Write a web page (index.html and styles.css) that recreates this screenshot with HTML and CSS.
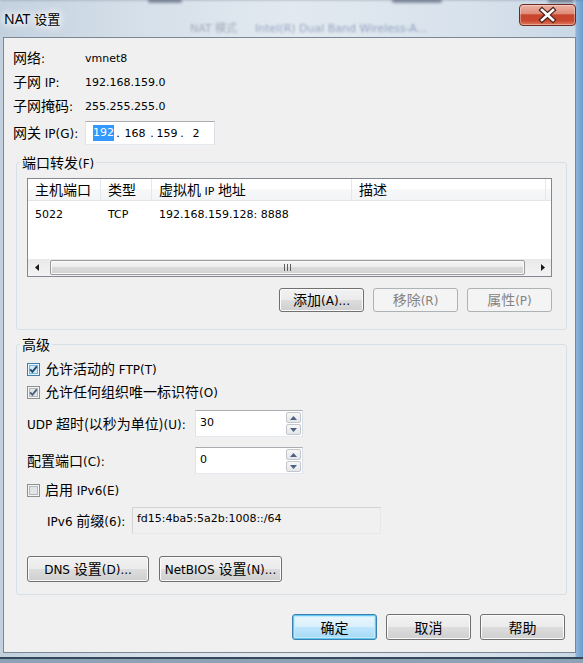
FILE: index.html
```html
<!DOCTYPE html>
<html lang="zh-CN">
<head>
<meta charset="utf-8">
<title>NAT 设置</title>
<link rel="stylesheet" href="styles.css">
</head>
<body>
<div class="window">
  <div class="titlebar">
    <div class="glass" aria-hidden="true">
      <div class="blob b1"></div>
      <div class="blob b2"></div>
      <div class="blob b3"></div>
      <div class="blob b4"></div>
      <span class="ghost gh4">NAT 模式</span>
      <span class="ghost gh5">Intel(R) Dual Band Wireless-A...</span>
    </div>
    <div class="title"><span class="tl">NAT</span> <span class="tz">设置</span></div>
    <div class="close">
      <svg width="57" height="22" viewBox="0 0 57 22">
        <path d="M23 6 L34 16 M34 6 L23 16" stroke="#4a2019" stroke-width="5" stroke-linecap="square" fill="none"/>
        <path d="M23 6 L34 16 M34 6 L23 16" stroke="#ffffff" stroke-width="2.6" stroke-linecap="square" fill="none"/>
      </svg>
    </div>
  </div>

  <div class="client">
    <div class="info">
      <div class="row"><span class="lbl"><span class="z">网络</span>:</span><span class="v">vmnet8</span></div>
      <div class="row"><span class="lbl"><span class="z">子网</span> IP:</span><span class="v">192.168.159.0</span></div>
      <div class="row"><span class="lbl"><span class="z">子网掩码</span>:</span><span class="v">255.255.255.0</span></div>
      <div class="row gw">
        <span class="lbl"><span class="z">网关</span> IP(G):</span>
        <div class="ipbox"><span class="sel">192</span><span class="dot">.</span><span class="oc w26">168</span><span class="dot">.</span><span class="oc w22">159</span><span class="dot">.</span><span class="oc w20">2</span></div>
      </div>
    </div>

    <div class="group gp1">
      <div class="cap"><span class="z">端口转发</span>(F)</div>
      <div class="list">
        <div class="lhead">
          <div class="cell c1"><span><span class="z">主机端口</span></span></div>
          <div class="cell c2"><span><span class="z">类型</span></span></div>
          <div class="cell c3"><span><span class="z">虚拟机</span> IP <span class="z">地址</span></span></div>
          <div class="cell c4"><span><span class="z">描述</span></span></div>
        </div>
        <div class="lbody">
          <div class="lrow">
            <div class="cell c1">5022</div>
            <div class="cell c2">TCP</div>
            <div class="cell c3">192.168.159.128: 8888</div>
            <div class="cell c4"></div>
          </div>
        </div>
        <div class="hscroll">
          <div class="sarr"><svg width="4" height="7" viewBox="0 0 4 7"><path d="M4 0 L0 3.5 L4 7Z" fill="#1a1a1a"/></svg></div>
          <div class="track">
            <div class="thumb">
              <svg width="7" height="7" viewBox="0 0 7 7">
                <path d="M0.5 0 V7 M3.5 0 V7 M6.5 0 V7" stroke="#5e5e5e" stroke-width="1"/>
              </svg>
            </div>
          </div>
          <div class="sarr"><svg width="4" height="7" viewBox="0 0 4 7"><path d="M0 0 L4 3.5 L0 7Z" fill="#1a1a1a"/></svg></div>
        </div>
      </div>
      <div class="btns">
        <div class="btn"><span><span class="z">添加</span>(A)...</span></div>
        <div class="btn dis"><span><span class="z">移除</span>(R)</span></div>
        <div class="btn dis"><span><span class="z">属性</span>(P)</span></div>
      </div>
    </div>

    <div class="group gp2">
      <div class="cap"><span class="z">高级</span></div>

      <div class="chkrow r1">
        <svg class="cb hot" width="13" height="13" viewBox="0 0 13 13">
          <rect class="o" x="0.5" y="0.5" width="12" height="12"/>
          <rect class="i" x="2.5" y="2.5" width="8" height="8"/>
          <path class="k" d="M3.2 6.4 L5.4 8.8 L9.8 3.4"/>
        </svg>
        <span><span class="z">允许活动的</span> FTP(T)</span>
      </div>

      <div class="chkrow r2">
        <svg class="cb" width="13" height="13" viewBox="0 0 13 13">
          <rect class="o" x="0.5" y="0.5" width="12" height="12"/>
          <rect class="i" x="2.5" y="2.5" width="8" height="8"/>
          <path class="k soft" d="M3.2 6.4 L5.4 8.8 L9.8 3.4"/>
        </svg>
        <span><span class="z">允许任何组织唯一标识符</span>(O)</span>
      </div>

      <div class="frow r3">
        <span class="flbl">UDP <span class="z">超时(以秒为单位)</span>(U):</span>
        <div class="spin">
          <div class="val">30</div>
          <div class="arrows">
            <div class="ab"><svg width="7" height="4" viewBox="0 0 7 4"><path d="M0 4 L3.5 0 L7 4Z"/></svg></div>
            <div class="ab"><svg width="7" height="4" viewBox="0 0 7 4"><path d="M0 0 L3.5 4 L7 0Z"/></svg></div>
          </div>
        </div>
      </div>

      <div class="frow r4">
        <span class="flbl"><span class="z">配置端口</span>(C):</span>
        <div class="spin">
          <div class="val">0</div>
          <div class="arrows">
            <div class="ab"><svg width="7" height="4" viewBox="0 0 7 4"><path d="M0 4 L3.5 0 L7 4Z"/></svg></div>
            <div class="ab"><svg width="7" height="4" viewBox="0 0 7 4"><path d="M0 0 L3.5 4 L7 0Z"/></svg></div>
          </div>
        </div>
      </div>

      <div class="chkrow r5">
        <svg class="cb" width="13" height="13" viewBox="0 0 13 13">
          <rect class="o" x="0.5" y="0.5" width="12" height="12"/>
          <rect class="i" x="2.5" y="2.5" width="8" height="8"/>
        </svg>
        <span><span class="z">启用</span> IPv6(E)</span>
      </div>

      <div class="frow r6">
        <span class="plbl">IPv6 <span class="z">前缀</span>(6):</span>
        <div class="ro">fd15:4ba5:5a2b:1008::/64</div>
      </div>

      <div class="btns start r7">
        <div class="btn wdns"><span>DNS <span class="z">设置</span>(D)...</span></div>
        <div class="btn wnb"><span>NetBIOS <span class="z">设置</span>(N)...</span></div>
      </div>
    </div>

    <div class="footer">
      <div class="btn big def"><span class="z">确定</span></div>
      <div class="btn big"><span class="z">取消</span></div>
      <div class="btn big"><span class="z">帮助</span></div>
    </div>
  </div>
</div>
</body>
</html>
```

FILE: styles.css
```css
* { box-sizing: border-box; }
html, body { margin: 0; padding: 0; }
body {
  width: 583px;
  height: 663px;
  overflow: hidden;
  font-family: "DejaVu Sans", "Noto Sans CJK SC", sans-serif;
  font-size: 12px;
  color: #000;
}
.z {
  font-family: "Noto Sans CJK SC", sans-serif;
  font-size: 14px;
  line-height: 14px;
}
.v, .ipbox, .list, .val, .ro { font-size: 11px; }

/* window frame (Aero glass) */
.window {
  width: 583px;
  height: 663px;
  display: flex;
  flex-direction: column;
  padding: 0 7px 10px 3px;
  background:
    linear-gradient(to bottom, transparent 657px, #34475b 657px, #34475b 659px, #8ea2b6 659px),
    linear-gradient(90deg, #c3d1df 0, #d6e0ea 25%, #e2e9f0 50%, #d8e2ec 80%, #cad8e6 98.6%, #8db4da 98.8%, #6b9dcd 100%);
}
.titlebar {
  position: relative;
  height: 37px;
  flex: none;
  display: flex;
  justify-content: space-between;
  align-items: flex-start;
}
.glass { position: absolute; inset: 0 -7px 0 -3px; overflow: hidden; }
.blob {
  position: absolute;
  top: -2px;
  height: 5px;
  background: rgba(30, 45, 70, 0.45);
  filter: blur(1.5px);
  border-radius: 2px;
}
.b1 { left: 148px; width: 34px; }
.b2 { left: 392px; width: 50px; }
.b3 { left: 548px; width: 26px; }
.b4 { left: 0; width: 583px; top: -3px; height: 3px; background: rgba(40, 55, 80, 0.35); }
.ghost {
  position: absolute;
  top: 22px;
  font-family: "DejaVu Sans", "Noto Sans CJK SC", sans-serif;
  font-size: 11px;
  line-height: 13px;
  filter: blur(1.3px);
  white-space: nowrap;
}
.gh4 { left: 190px; color: rgba(25, 40, 65, 0.3); }
.gh5 { left: 255px; color: rgba(30, 60, 120, 0.4); }

.title {
  position: relative;
  margin: 10px 0 0 1px;
  line-height: 18px;
  text-shadow: 0 0 6px #fff, 0 0 10px #fff, 0 0 12px #fff;
}
.tl { font-family: "Noto Sans", sans-serif; font-size: 14px; }
.tz { font-family: "Noto Sans CJK SC", sans-serif; font-size: 13px; }

.close {
  position: relative;
  width: 57px;
  height: 22px;
  margin-top: 4px;
  border: 1px solid #6e2a20;
  border-radius: 4px;
  background: linear-gradient(#eab1a3 0%, #df8f7b 42%, #c8452d 50%, #c8472e 78%, #df7c5f 100%);
  box-shadow: inset 0 0 0 1px rgba(255, 255, 255, 0.35);
}
.close svg { position: absolute; left: -1px; top: -1px; }

/* client area */
.client {
  flex: 1;
  border: 1px solid #7a8795;
  background: #f0f0f0;
  display: flex;
  flex-direction: column;
}

.info { padding: 8px 0 0 9px; }
.row { display: flex; align-items: center; height: 24px; }
.lbl { width: 72px; flex: none; white-space: nowrap; }
.gw { margin-top: 3px; }
.ipbox {
  width: 130px;
  height: 24px;
  border: 1px solid;
  border-color: #abadb3 #dbdfe6 #e3e9ef #e2e3ea;
  background: #fff;
  display: flex;
  align-items: center;
  padding-left: 7px;
}
.sel { background: #3399ff; color: #fff; height: 16px; line-height: 16px; }
.dot { width: 8px; text-align: center; }
.oc { text-align: center; }
.w26 { width: 26px; }
.w22 { width: 22px; }
.w20 { width: 20px; }

/* group boxes */
.group {
  border: 1px solid #d5dfe5;
  border-radius: 3px;
  margin: 17px 8px 0 12px;
  padding: 0 14px 17px 10px;
}
.gp2 { margin-top: 14px; padding-bottom: 12px; }
.cap {
  margin: -8px 0 0 -7px;
  padding: 0 2px;
  width: max-content;
  background: #f0f0f0;
  height: 14px;
  line-height: 14px;
}

/* list view */
.list {
  margin-top: 9px;
  height: 99px;
  border: 1px solid #828790;
  background: #fff;
  display: flex;
  flex-direction: column;
}
.lhead {
  height: 22px;
  flex: none;
  display: flex;
  border-bottom: 1px solid #e5e5e5;
  background: linear-gradient(#ffffff, #ffffff 50%, #f7f8f9 50%, #f3f4f6);
}
.lhead .cell { border-right: 1px solid #e3e8ee; }
.cell {
  display: flex;
  align-items: center;
  padding-left: 7px;
  white-space: nowrap;
  flex: none;
}
.c1 { width: 73px; }
.c2 { width: 51px; }
.c3 { width: 200px; }
.c4 { width: 194px; }
.lbody { flex: 1; padding-top: 1px; }
.lrow { display: flex; height: 24px; }

.hscroll {
  height: 17px;
  flex: none;
  display: flex;
  background: linear-gradient(#e9e9e9, #f3f3f3);
}
.sarr { width: 17px; display: flex; align-items: center; justify-content: center; }
.track { flex: 1; padding: 1px 0 1px 5px; }
.thumb {
  width: 475px;
  height: 15px;
  border: 1px solid #9b9b9b;
  border-radius: 2px;
  background: linear-gradient(#f5f5f5, #ececec 45%, #dadada 50%, #d2d2d2);
  box-shadow: inset 0 0 0 1px #f9f9f9;
  display: flex;
  align-items: center;
  justify-content: center;
}

/* buttons */
.btns { display: flex; justify-content: flex-end; gap: 9px; margin-top: 11px; }
.btns.start { justify-content: flex-start; gap: 10px; margin-top: 22px; }
.btn {
  width: 85px;
  height: 24px;
  border: 1px solid #707070;
  border-radius: 3px;
  background: linear-gradient(#f2f2f2 0, #ebebeb 48%, #dddddd 50%, #cfcfcf 100%);
  box-shadow: inset 0 0 0 1px #fbfbfb;
  display: flex;
  align-items: center;
  justify-content: center;
  white-space: nowrap;
}
.btn.dis {
  border-color: #adb2b5;
  background: #f4f4f4;
  color: #838383;
  box-shadow: none;
}
.btn.wdns { width: 122px; height: 26px; }
.btn.wnb { width: 123px; height: 26px; }
.btn.big { width: 85px; height: 26px; }
.btn.def {
  border-color: #3c7fb1;
  background: linear-gradient(#eaf6fd 0, #d9f0fc 48%, #bee6fd 50%, #a7d9f5 100%);
  box-shadow: inset 0 0 0 1px #62c8f2, inset 0 0 0 2px #bfeafb;
}

/* advanced group */
.chkrow { display: flex; align-items: center; gap: 5px; height: 16px; white-space: nowrap; }
.r1 { margin-top: 10px; }
.r2 { margin-top: 7px; }
.r5 { margin-top: 8px; }
.cb { flex: none; }
.cb .o { fill: #f4f4f4; stroke: #8e8f8f; }
.cb .i { fill: #e2e4e7; stroke: #b5b9be; }
.cb.hot .o { fill: #eaf6fd; stroke: #3c7fb1; }
.cb.hot .i { fill: #cfe9f8; stroke: #79b6db; }
.cb .k { fill: none; stroke: #21476b; stroke-width: 1.9; }
.cb .k.soft { stroke: #4a607d; }

.frow { display: flex; align-items: center; height: 27px; }
.r3 { margin-top: 10px; }
.r4 { margin-top: 10px; }
.r6 { margin-top: 9px; padding-left: 20px; }
.flbl { width: 168px; flex: none; white-space: nowrap; }
.plbl { width: 85px; flex: none; white-space: nowrap; }
.spin {
  width: 108px;
  height: 27px;
  border: 1px solid;
  border-color: #abadb3 #dbdfe6 #e3e9ef #e2e3ea;
  background: #fff;
  display: flex;
}
.val { flex: 1; padding: 5px 0 0 4px; line-height: 13px; }
.arrows { width: 16px; display: flex; flex-direction: column; gap: 1px; padding: 1px 1px 1px 0; }
.ab {
  flex: 1;
  border: 1px solid #c3c7cd;
  border-radius: 2px;
  background: linear-gradient(#f7f7f7, #e4e6e9);
  display: flex;
  align-items: center;
  justify-content: center;
}
.ab path { fill: #4d6185; }
.ro {
  width: 249px;
  height: 27px;
  border: 1px solid;
  border-color: #d3d3d3 #e8e8e8 #e8e8e8 #d3d3d3;
  background: #f0f0f0;
  padding: 4px 0 0 4px;
  line-height: 13px;
}

.footer {
  display: flex;
  justify-content: flex-end;
  gap: 9px;
  margin-top: 19px;
  padding-right: 10px;
}
```
